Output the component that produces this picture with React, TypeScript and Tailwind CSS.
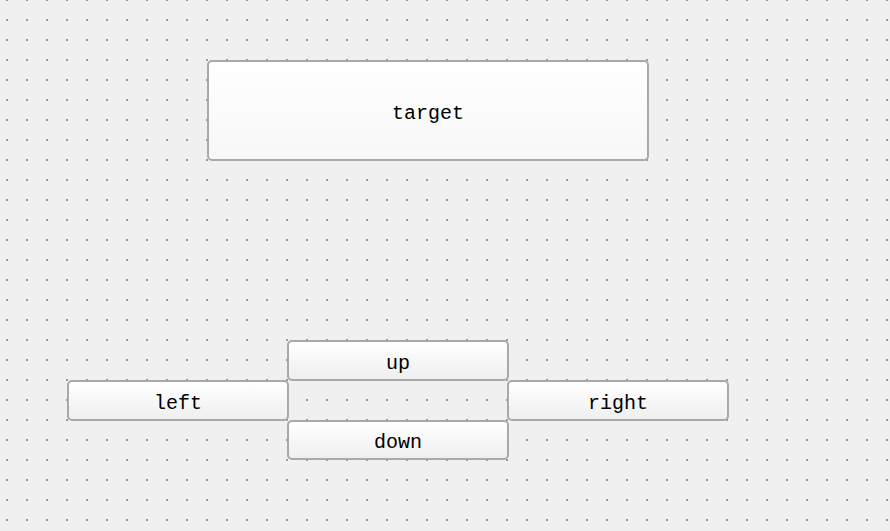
import type { ReactNode } from "react"

function FormButton({ children, className }: { children: ReactNode; className?: string }) {
  return (
    <button
      type="button"
      className={
        "flex items-center justify-center rounded-[5px] border-2 border-[#a9a9a9] bg-gradient-to-b from-white to-[#efefef] pt-[6px] text-[20px] text-black " +
        (className ?? "")
      }
      style={{ fontFamily: '"Liberation Mono", "Noto Sans CJK SC", monospace' }}
    >
      {children}
    </button>
  )
}

function DotGrid() {
  return (
    <svg className="absolute inset-0 h-full w-full" aria-hidden>
      <defs>
        <pattern id="dots" width="20" height="20" patternUnits="userSpaceOnUse">
          <rect x="6" y="0" width="2" height="1" fill="#9c9c9c" />
          <rect x="6" y="19" width="2" height="1" fill="#9c9c9c" />
        </pattern>
      </defs>
      <rect width="100%" height="100%" fill="url(#dots)" />
    </svg>
  )
}

export default function App() {
  return (
    <div className="relative h-[531px] w-[890px] overflow-hidden bg-[#f0f0f0]">
      <DotGrid />

      <div className="relative pt-[60px]">
        <FormButton className="ml-[207px] h-[101px] w-[442px] to-[#f7f7f7]">target</FormButton>

        <div className="ml-[67px] mt-[179px] grid grid-cols-[220px_220px_220px] grid-rows-[40px_40px_40px]">
          <FormButton className="col-start-2 row-start-1 h-[41px] w-[222px]">up</FormButton>
          <FormButton className="col-start-1 row-start-2 h-[41px] w-[222px]">left</FormButton>
          <FormButton className="col-start-3 row-start-2 h-[41px] w-[222px]">right</FormButton>
          <FormButton className="col-start-2 row-start-3 h-[40px] w-[222px]">down</FormButton>
        </div>
      </div>
    </div>
  )
}
